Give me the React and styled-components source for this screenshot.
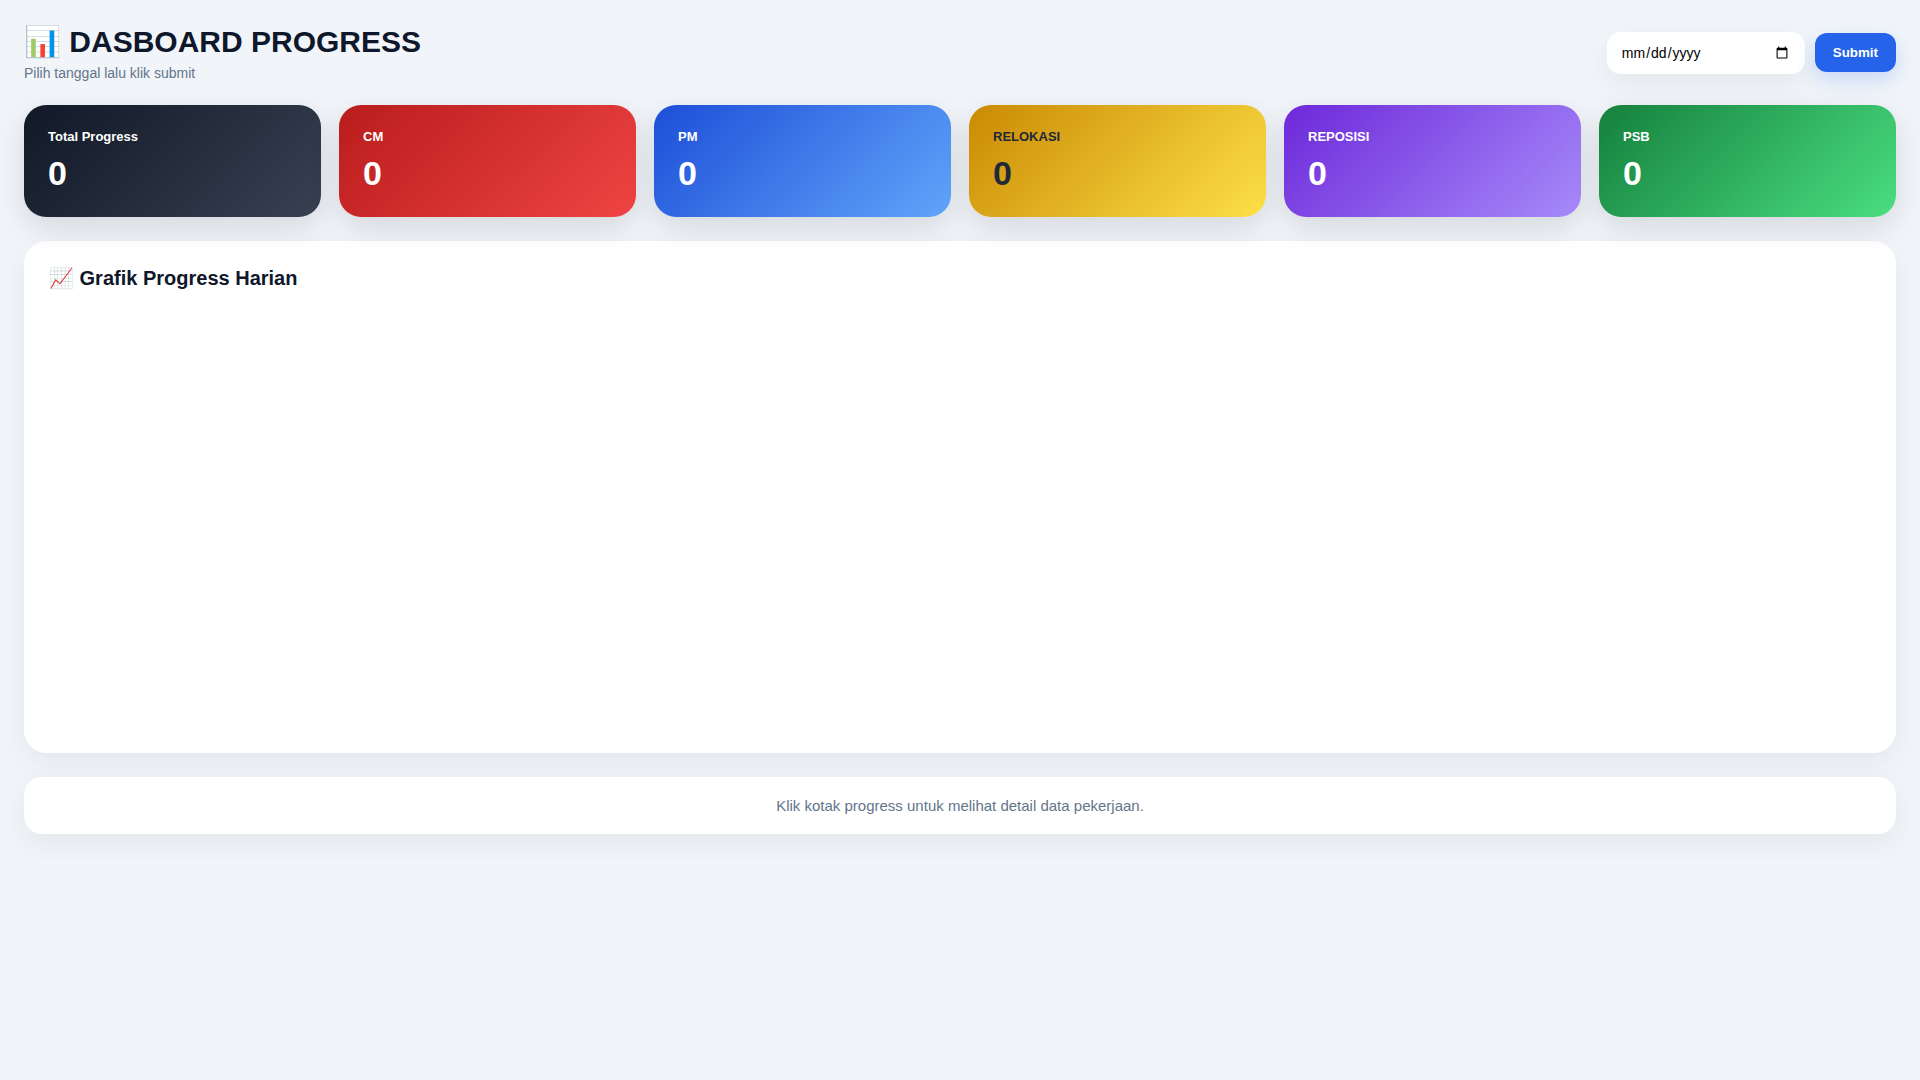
import React, { useState } from 'react';
import styled, { createGlobalStyle } from 'styled-components';

const GlobalStyle = createGlobalStyle`
  * {
    box-sizing: border-box;
    margin: 0;
    padding: 0;
  }
  body {
    padding: 24px;
    background: #f1f5f9;
    font-family: 'Liberation Sans', Arial, sans-serif;
  }
`;

const gradients = {
  total: '#111827, #374151',
  cm: '#b91c1c, #ef4444',
  pm: '#1d4ed8, #60a5fa',
  relokasi: '#ca8a04, #fde047',
  reposisi: '#6d28d9, #a78bfa',
  psb: '#15803d, #4ade80'
};

const cards = [
  { id: 'total', label: 'Total Progress', value: 0 },
  { id: 'cm', label: 'CM', value: 0 },
  { id: 'pm', label: 'PM', value: 0 },
  { id: 'relokasi', label: 'RELOKASI', value: 0 },
  { id: 'reposisi', label: 'REPOSISI', value: 0 },
  { id: 'psb', label: 'PSB', value: 0 }
];

const Header = styled.header`
  display: flex;
  justify-content: space-between;
  align-items: center;
  flex-wrap: wrap;
  gap: 16px;
  margin-bottom: 24px;
`;

const Title = styled.h1`
  font-size: 30px;
  font-weight: 800;
  color: #0f172a;
`;

const Subtitle = styled.p`
  margin-top: 6px;
  font-size: 14px;
  color: #64748b;
`;

const Filter = styled.form`
  display: flex;
  align-items: center;
  gap: 10px;
`;

const DateInput = styled.input`
  width: 198px;
  padding: 12px 14px;
  border: none;
  border-radius: 14px;
  background: white;
  font-family: inherit;
  font-size: 14px;
  box-shadow: 0 10px 30px rgba(0, 0, 0, 0.06);
`;

const SubmitButton = styled.button`
  padding: 12px 18px;
  border: none;
  border-radius: 12px;
  background: #2563eb;
  color: white;
  font-family: inherit;
  font-weight: bold;
  cursor: pointer;
  box-shadow: 0 8px 20px rgba(37, 99, 235, 0.2);
`;

const Cards = styled.section`
  display: grid;
  grid-template-columns: repeat(auto-fit, minmax(220px, 1fr));
  gap: 18px;
  margin-bottom: 24px;
`;

const Card = styled.button`
  position: relative;
  padding: 24px;
  border: none;
  border-radius: 22px;
  background: linear-gradient(135deg, ${props => gradients[props.id]});
  color: ${props => (props.id === 'relokasi' ? '#1f2937' : 'white')};
  font-family: inherit;
  text-align: left;
  cursor: pointer;
  box-shadow: 0 10px 30px rgba(0, 0, 0, 0.12);
`;

const CardLabel = styled.span`
  display: block;
  font-size: 13px;
  font-weight: bold;
`;

const CardValue = styled.strong`
  display: block;
  margin-top: 10px;
  font-size: 34px;
`;

const Panel = styled.section`
  padding: 24px;
  margin-bottom: 24px;
  border: 1px solid white;
  border-radius: 22px;
  background: white;
  box-shadow: 0 10px 30px rgba(0, 0, 0, 0.06);
`;

const PanelTitle = styled.h2`
  margin-bottom: 18px;
  font-size: 20px;
  color: #0f172a;
`;

const Chart = styled.div`
  height: 420px;
`;

const Info = styled.p`
  padding: 20px;
  border-radius: 18px;
  background: white;
  color: #64748b;
  font-size: 15px;
  text-align: center;
  box-shadow: 0 10px 30px rgba(0, 0, 0, 0.06);
`;

const App = () => {
  const [date, setDate] = useState('');

  return (
    <>
      <GlobalStyle />
      <Header>
        <div>
          <Title>📊 DASBOARD PROGRESS</Title>
          <Subtitle>Pilih tanggal lalu klik submit</Subtitle>
        </div>
        <Filter onSubmit={e => e.preventDefault()}>
          <DateInput
            type="date"
            aria-label="Tanggal"
            value={date}
            onChange={e => setDate(e.target.value)}
          />
          <SubmitButton type="submit">Submit</SubmitButton>
        </Filter>
      </Header>
      <Cards>
        {cards.map(card => (
          <Card key={card.id} id={card.id} type="button">
            <CardLabel>{card.label}</CardLabel>
            <CardValue>{card.value}</CardValue>
          </Card>
        ))}
      </Cards>
      <Panel>
        <PanelTitle>📈 Grafik Progress Harian</PanelTitle>
        <Chart />
      </Panel>
      <Info>Klik kotak progress untuk melihat detail data pekerjaan.</Info>
    </>
  );
};

export default App;
